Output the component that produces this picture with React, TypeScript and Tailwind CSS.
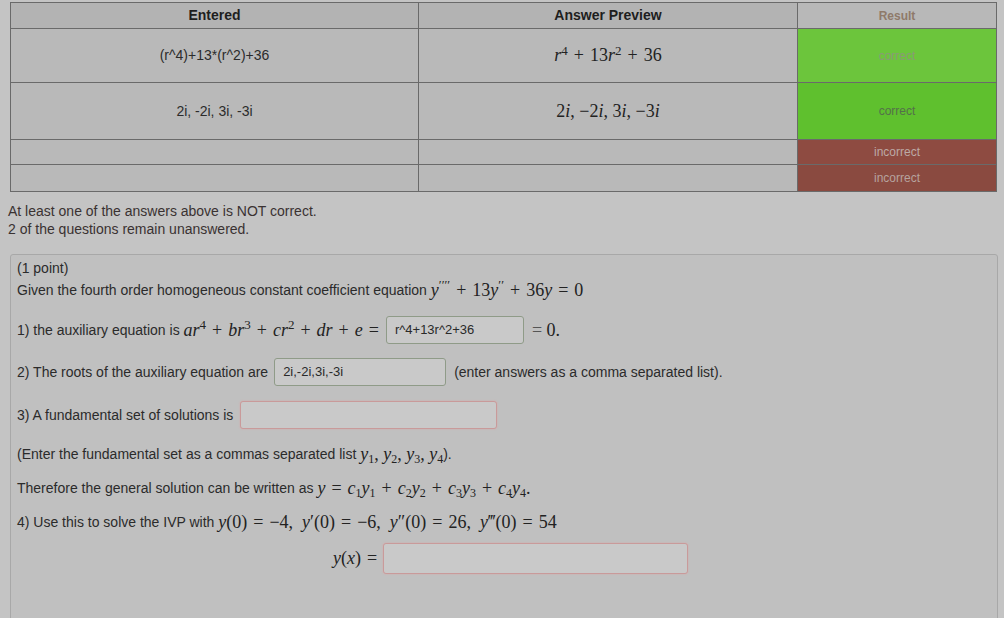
import React from 'react'

// Small helpers for the MathJax-looking pieces
const V = ({ children }: { children: React.ReactNode }) => (
  <i className="font-['Liberation_Serif',serif]">{children}</i>
)

const Op = ({ children }: { children: React.ReactNode }) => (
  <span className="mx-[6px] font-['Liberation_Serif',serif] not-italic">{children}</span>
)

const Math = ({ children }: { children: React.ReactNode }) => (
  <span className="font-['Liberation_Serif',serif] text-[18px] text-[#222] whitespace-nowrap">{children}</span>
)

const Sub = ({ children }: { children: React.ReactNode }) => (
  <sub className="text-[12px]">{children}</sub>
)

const Sup = ({ children }: { children: React.ReactNode }) => (
  <sup className="text-[13px]">{children}</sup>
)

const Field = ({ value, w, ok }: { value?: string; w: string; ok: boolean }) => (
  <div
    className={`${w} h-[28px] flex items-center px-[8px] rounded-[3px] border bg-[#c9c9c9] text-[13px] text-[#2a2a2a] ${
      ok ? 'border-[#8f9b88]' : 'border-[#c99a9a] shadow-[0_0_2px_#d8a8a8]'
    }`}
  >
    {value}
  </div>
)

export default function App() {
  return (
    <div className="w-[1004px] h-[618px] overflow-hidden bg-[#c4c4c4] font-['Liberation_Sans',Arial,sans-serif] text-[14px] text-[#2b2b2b]">
      {/* Attempt results table */}
      <div className="pl-[10px] pr-[7px] pt-[2px]">
        <table className="w-full table-fixed border-collapse border border-[#5e5e5e] bg-[#b9b9b9]">
          <colgroup>
            <col className="w-[408px]" />
            <col className="w-[379px]" />
            <col />
          </colgroup>
          <thead>
            <tr className="h-[26px]">
              <th className="border border-[#6a6a6a] bg-[#b3b3b3] font-bold text-[14px] text-[#1e1e1e]">Entered</th>
              <th className="border border-[#6a6a6a] bg-[#b3b3b3] font-bold text-[14px] text-[#1e1e1e]">Answer Preview</th>
              <th className="border border-[#6a6a6a] bg-[#b8b8b8] font-bold text-[12px] text-[#8f7a6a]">Result</th>
            </tr>
          </thead>
          <tbody>
            <tr className="h-[54px]">
              <td className="border border-[#6a6a6a] text-center">(r^4)+13*(r^2)+36</td>
              <td className="border border-[#6a6a6a] text-center">
                <Math>
                  <V>r</V>
                  <Sup>4</Sup>
                  <Op>+</Op>13<V>r</V>
                  <Sup>2</Sup>
                  <Op>+</Op>36
                </Math>
              </td>
              <td className="border border-[#6a6a6a] bg-[#6cc53c] text-center text-[12px] text-[#8a9a76]">correct</td>
            </tr>
            <tr className="h-[57px]">
              <td className="border border-[#6a6a6a] text-center">2i, -2i, 3i, -3i</td>
              <td className="border border-[#6a6a6a] text-center">
                <Math>
                  2<V>i</V>, −2<V>i</V>, 3<V>i</V>, −3<V>i</V>
                </Math>
              </td>
              <td className="border border-[#6a6a6a] bg-[#5fc02e] text-center text-[12px] text-[#54704a]">correct</td>
            </tr>
            <tr className="h-[25px]">
              <td className="border border-[#6a6a6a]"></td>
              <td className="border border-[#6a6a6a]"></td>
              <td className="border border-[#6a6a6a] bg-[#8e4b41] text-center text-[12px] text-[#bca9a5]">incorrect</td>
            </tr>
            <tr className="h-[27px]">
              <td className="border border-[#6a6a6a]"></td>
              <td className="border border-[#6a6a6a]"></td>
              <td className="border border-[#6a6a6a] bg-[#8a4a40] text-center text-[12px] text-[#b6a29e]">incorrect</td>
            </tr>
          </tbody>
        </table>
      </div>

      {/* Messages */}
      <div className="px-[8px] pt-[10px] leading-[18px] text-[#3a3232]">
        <div>At least one of the answers above is NOT correct.</div>
        <div>2 of the questions remain unanswered.</div>
      </div>

      {/* Problem */}
      <div className="ml-[10px] mr-[6px] mt-[16px] h-[400px] border border-[#a8a8a8] rounded-[3px] bg-[#c0c0c0] pl-[6px] pt-[2px]">
        <div className="h-[22px] flex items-center">(1 point)</div>
        <div className="h-[22px] flex items-center">
          <span>Given the fourth order homogeneous constant coefficient equation&nbsp;</span>
          <Math>
            <V>y</V>
            <Sup>′′′′</Sup>
            <Op>+</Op>13<V>y</V>
            <Sup>′′</Sup>
            <Op>+</Op>36<V>y</V>
            <Op>=</Op>0
          </Math>
        </div>

        <div className="mt-[12px] h-[34px] flex items-center">
          <span>1) the auxiliary equation is&nbsp;</span>
          <Math>
            <V>a</V><V>r</V><Sup>4</Sup>
            <Op>+</Op>
            <V>b</V><V>r</V><Sup>3</Sup>
            <Op>+</Op>
            <V>c</V><V>r</V><Sup>2</Sup>
            <Op>+</Op>
            <V>d</V><V>r</V>
            <Op>+</Op>
            <V>e</V>
            <Op>=</Op>
          </Math>
          <div className="ml-[1px]">
            <Field value="r^4+13r^2+36" w="w-[138px]" ok />
          </div>
          <Math>
            <span className="ml-[8px] text-[#555]">=</span> 0.
          </Math>
        </div>

        <div className="mt-[8px] h-[34px] flex items-center">
          <span className="mr-[6px]">2) The roots of the auxiliary equation are</span>
          <Field value="2i,-2i,3i,-3i" w="w-[172px]" ok />
          <span className="ml-[8px]">(enter answers as a comma separated list).</span>
        </div>

        <div className="mt-[9px] h-[34px] flex items-center">
          <span className="mr-[7px]">3) A fundamental set of solutions is</span>
          <Field w="w-[257px]" ok={false} />
        </div>

        <div className="mt-[11px] h-[22px] flex items-center">
          <span>(Enter the fundamental set as a commas separated list&nbsp;</span>
          <Math>
            <V>y</V><Sub>1</Sub>, <V>y</V><Sub>2</Sub>, <V>y</V><Sub>3</Sub>, <V>y</V><Sub>4</Sub>
          </Math>
          <span>).</span>
        </div>

        <div className="mt-[12px] h-[22px] flex items-center">
          <span>Therefore the general solution can be written as&nbsp;</span>
          <Math>
            <V>y</V>
            <Op>=</Op>
            <V>c</V><Sub>1</Sub><V>y</V><Sub>1</Sub>
            <Op>+</Op>
            <V>c</V><Sub>2</Sub><V>y</V><Sub>2</Sub>
            <Op>+</Op>
            <V>c</V><Sub>3</Sub><V>y</V><Sub>3</Sub>
            <Op>+</Op>
            <V>c</V><Sub>4</Sub><V>y</V><Sub>4</Sub>.
          </Math>
        </div>

        <div className="mt-[12px] h-[22px] flex items-center">
          <span>4) Use this to solve the IVP with&nbsp;</span>
          <Math>
            <V>y</V>(0)<Op>=</Op>−4,&nbsp;&nbsp;
            <V>y</V>′(0)<Op>=</Op>−6,&nbsp;&nbsp;
            <V>y</V>″(0)<Op>=</Op>26,&nbsp;&nbsp;
            <V>y</V>‴(0)<Op>=</Op>54
          </Math>
        </div>

        <div className="mt-[8px] h-[34px] flex items-center pl-[316px]">
          <Math>
            <V>y</V>(<V>x</V>)<Op>=</Op>
          </Math>
          <Field w="w-[305px] h-[31px]" ok={false} />
        </div>
      </div>
    </div>
  )
}
